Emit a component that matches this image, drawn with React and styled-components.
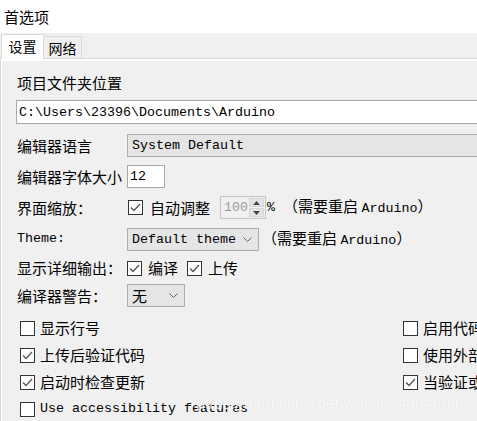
import React from 'react';
import styled, { createGlobalStyle } from 'styled-components';

const GlobalStyle = createGlobalStyle`
  html, body {
    margin: 0;
    padding: 0;
    overflow: hidden;
    background: #f0f0f0;
  }
  body {
    font-family: "Noto Sans CJK SC", "Noto Sans", sans-serif;
    color: #000;
  }
`;

const Window = styled.div`
  position: relative;
  width: 560px;
  height: 421px;
  overflow: hidden;
  background: #f0f0f0;
`;

const TitleBar = styled.div`
  height: 33px;
  background: #fff;
  display: flex;
  align-items: center;
  padding-left: 4px;
  font-size: 15px;
  line-height: 20px;
`;

const TabStrip = styled.div`
  height: 25px;
  display: flex;
  align-items: flex-end;
  padding-left: 1px;
  position: relative;
  z-index: 1;
`;

const Tab = styled.div`
  box-sizing: border-box;
  height: ${p => (p.$active ? '25px' : '22px')};
  margin-bottom: ${p => (p.$active ? '-1px' : '0')};
  margin-left: ${p => (p.$active ? '0' : '-1px')};
  width: ${p => p.$w}px;
  border: 1px solid #d9d9d9;
  border-bottom: none;
  background: ${p => (p.$active ? '#fff' : '#f0f0f0')};
  font-size: 14px;
  line-height: 20px;
  display: flex;
  justify-content: center;
  align-items: center;
  padding-bottom: ${p => (p.$active ? '2px' : '0')};
`;

const Panel = styled.div`
  border-top: 1px solid #d9d9d9;
  border-left: 1px solid #d9d9d9;
  box-shadow: inset 1px 2px 0 #fff;
  height: 362px;
  padding-left: 15px;
  display: flex;
  flex-direction: column;
  font-size: 15px;
`;

const FieldLabel = styled.div`
  margin-top: 14px;
  height: 20px;
  line-height: 20px;
  padding-left: 1px;
`;

const PathInput = styled.div`
  box-sizing: border-box;
  margin-top: 7px;
  height: 24px;
  width: 520px;
  border: 1px solid #a8a8a8;
  background: #fff;
  padding-left: 2px;
  display: flex;
  align-items: center;
  font-family: "Liberation Mono", monospace;
  font-size: 13.33px;
`;

const FormRow = styled.div`
  margin-top: ${p => p.$mt}px;
  height: ${p => p.$h}px;
  display: flex;
  align-items: center;
`;

const RowLabel = styled.div`
  width: 111px;
  flex: none;
  padding-left: 1px;
  box-sizing: border-box;
  line-height: 20px;
  font-family: ${p => (p.$mono ? '"Liberation Mono", monospace' : 'inherit')};
  font-size: ${p => (p.$mono ? '13.33px' : '15px')};
`;

const Select = styled.div`
  box-sizing: border-box;
  width: ${p => p.$w}px;
  height: 23px;
  flex: none;
  border: 1px solid #adadad;
  background: #e5e5e5;
  display: flex;
  align-items: center;
  justify-content: space-between;
  padding: 0 6px 0 4px;
  font-family: ${p => (p.$mono ? '"Liberation Mono", monospace' : 'inherit')};
  font-size: ${p => (p.$mono ? '13.33px' : '15px')};
`;

const Mono = styled.span`
  font-family: "Liberation Mono", monospace;
  font-size: 13.33px;
`;

const Note = styled.span`
  margin-left: ${p => p.$ml}px;
  white-space: nowrap;
  line-height: 20px;
`;

const Box = styled.span`
  box-sizing: border-box;
  width: 15px;
  height: 15px;
  flex: none;
  border: 1px solid #333;
  background: #fff;
  display: inline-flex;
  align-items: center;
  justify-content: center;
`;

const CheckWrap = styled.label`
  display: inline-flex;
  align-items: center;
  gap: ${p => p.$gap ?? 5}px;
  margin-left: ${p => p.$ml ?? 0}px;
  white-space: nowrap;
  line-height: 20px;
  font-family: ${p => (p.$mono ? '"Liberation Mono", monospace' : 'inherit')};
  font-size: ${p => (p.$mono ? '13.33px' : '15px')};
`;

const Spinner = styled.div`
  box-sizing: border-box;
  margin-left: 10px;
  width: 46px;
  height: 23px;
  border: 1px solid #c4c4c4;
  background: #f0f0f0;
  display: flex;
  align-items: stretch;
`;

const SpinValue = styled.div`
  flex: 1;
  display: flex;
  align-items: center;
  padding-left: 3px;
  color: #9a9a9a;
  font-family: "Liberation Mono", monospace;
  font-size: 13.33px;
`;

const SpinButtons = styled.div`
  width: 15px;
  display: flex;
  flex-direction: column;
  gap: 1px;
  padding: 1px 1px 1px 0;
`;

const SpinButton = styled.div`
  flex: 1;
  background: #e3e3e3;
  border: 1px solid #d6d6d6;
  display: flex;
  align-items: center;
  justify-content: center;
`;

const CheckGrid = styled.div`
  margin-top: 11px;
  display: grid;
  grid-template-columns: 383px 200px;
  grid-auto-rows: 20px;
  row-gap: 7px;
  padding-left: 4px;
`;

const Watermark = styled.div`
  position: absolute;
  left: 196px;
  top: 396px;
  font-family: "Liberation Sans", Arial, sans-serif;
  font-size: 16px;
  line-height: 16px;
  color: rgba(255, 255, 255, 0.85);
  text-shadow: 0 0 1px rgba(0, 0, 0, 0.12);
  white-space: nowrap;
  pointer-events: none;
`;

const Chevron = () => (
  <svg width="9" height="5" viewBox="0 0 9 5">
    <polyline points="0.5,0.5 4.5,4.5 8.5,0.5" fill="none" stroke="#606060" strokeWidth="1" />
  </svg>
);

const Tick = () => (
  <svg width="11" height="9" viewBox="0 0 11 9">
    <polyline points="1,4.5 4,7.5 10,1" fill="none" stroke="#555" strokeWidth="1.3" />
  </svg>
);

const Arrow = ({ up }) => (
  <svg width="7" height="4" viewBox="0 0 7 4">
    <polygon points={up ? '0,4 3.5,0 7,4' : '0,0 3.5,4 7,0'} fill="#444" />
  </svg>
);

function Check({ checked, children, ...rest }) {
  return (
    <CheckWrap {...rest}>
      <Box>{checked && <Tick />}</Box>
      <span>{children}</span>
    </CheckWrap>
  );
}

const restartNote = (
  <>
    （需要重启 <Mono>Arduino</Mono>）
  </>
);

export default function App() {
  return (
    <Window>
      <GlobalStyle />
      <TitleBar>首选项</TitleBar>
      <TabStrip>
        <Tab $active $w={43}>设置</Tab>
        <Tab $w={39}>网络</Tab>
      </TabStrip>
      <Panel>
        <FieldLabel>项目文件夹位置</FieldLabel>
        <PathInput>C:\Users\23396\Documents\Arduino</PathInput>

        <FormRow $mt={10} $h={23}>
          <RowLabel>编辑器语言</RowLabel>
          <Select $w={400} $mono>System Default</Select>
        </FormRow>

        <FormRow $mt={8} $h={23}>
          <RowLabel>编辑器字体大小</RowLabel>
          <PathInput as="div" style={{ marginTop: 0, width: 38, height: 23 }}>12</PathInput>
        </FormRow>

        <FormRow $mt={8} $h={23}>
          <RowLabel>界面缩放：</RowLabel>
          <Check checked $gap={7} $ml={1}>自动调整</Check>
          <Spinner>
            <SpinValue>100</SpinValue>
            <SpinButtons>
              <SpinButton><Arrow up /></SpinButton>
              <SpinButton><Arrow /></SpinButton>
            </SpinButtons>
          </Spinner>
          <Mono style={{ marginLeft: 1 }}>%</Mono>
          <Note $ml={8}>{restartNote}</Note>
        </FormRow>

        <FormRow $mt={9} $h={22}>
          <RowLabel $mono>Theme:</RowLabel>
          <Select $w={132} $mono>
            <span>Default theme</span>
            <Chevron />
          </Select>
          <Note $ml={3}>{restartNote}</Note>
        </FormRow>

        <FormRow $mt={7} $h={22}>
          <RowLabel>显示详细输出：</RowLabel>
          <Check checked $gap={6}>编译</Check>
          <Check checked $gap={6} $ml={9}>上传</Check>
        </FormRow>

        <FormRow $mt={5} $h={23}>
          <RowLabel>编译器警告：</RowLabel>
          <Select $w={58}>
            <span>无</span>
            <Chevron />
          </Select>
        </FormRow>

        <CheckGrid>
          <Check>显示行号</Check>
          <Check>启用代码折叠</Check>
          <Check checked>上传后验证代码</Check>
          <Check>使用外部编辑器</Check>
          <Check checked>启动时检查更新</Check>
          <Check checked>当验证或上传时保存</Check>
          <Check $mono>Use accessibility features</Check>
        </CheckGrid>
      </Panel>
      <Watermark>https://blog.csdn.net/weixin_49048045</Watermark>
    </Window>
  );
}
